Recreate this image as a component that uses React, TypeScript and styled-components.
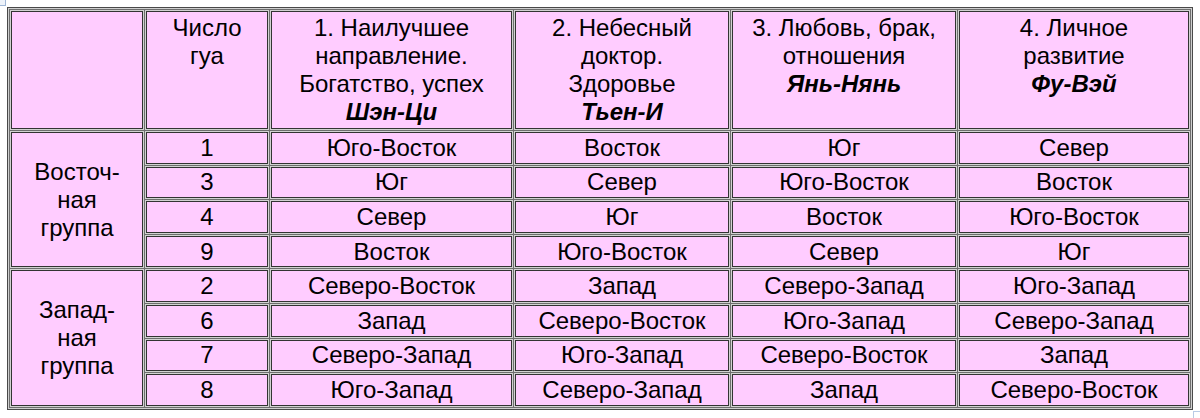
import React from "react";
import styled, { createGlobalStyle } from "styled-components";

const GlobalStyle = createGlobalStyle`
  html, body {
    margin: 0;
    padding: 0;
    background: #ffffff;
  }
  body {
    font-family: "Liberation Sans", Arial, Helvetica, sans-serif;
    color: #000;
  }
`;

const Page = styled.div`
  position: relative;
  width: 1200px;
  height: 418px;
  overflow: hidden;
  padding: 7px 0 0 7px;
  box-sizing: border-box;
`;

const Table = styled.table`
  table-layout: fixed;
  width: 1186px;
  border-collapse: separate;
  border-spacing: 3px;
  border: 1px solid #4a4a4a;
  box-shadow: inset 0 0 0 1px #cfcfcf;
  background: #6e6e6e;
  font-family: "Liberation Sans", Arial, Helvetica, sans-serif;
  font-size: 24px;
  line-height: 28px;
  color: #000;
`;

const Cell = styled.td<{ $w?: number; $head?: boolean }>`
  box-sizing: border-box;
  ${(p) => (p.$w ? `width: ${p.$w}px;` : "")}
  height: ${(p) => (p.$head ? "118px" : "31.6px")};
  padding: ${(p) => (p.$head ? "2px 1px 0" : "0 1px")};
  background: #ffccff;
  border: 1px solid #333333;
  box-shadow: 0 0 0 1px #d2d2d2;
  text-align: center;
  vertical-align: ${(p) => (p.$head ? "top" : "middle")};
  font-weight: normal;
  white-space: nowrap;
`;

const GroupCell = styled(Cell)`
  height: auto;
  white-space: normal;
`;

const Name = styled.b`
  font-style: italic;
  font-weight: bold;
`;

const CornerMark = styled.div`
  position: absolute;
  left: 0;
  top: 0;
  width: 5px;
  height: 5px;
  background: #eef3fa;
  border-right: 1px solid #9fb6d6;
  border-bottom: 1px solid #9fb6d6;
`;

const EndMark = styled.div`
  position: absolute;
  left: 1193px;
  top: 411px;
  width: 10px;
  height: 10px;
  border-left: 1px solid #b9cbe6;
  border-top: 1px solid #b9cbe6;
`;

type Row = [string, string, string, string, string];

const groups: { label: React.ReactNode; rows: Row[] }[] = [
  {
    label: (
      <>
        Восточ-
        <br />
        ная
        <br />
        группа
      </>
    ),
    rows: [
      ["1", "Юго-Восток", "Восток", "Юг", "Север"],
      ["3", "Юг", "Север", "Юго-Восток", "Восток"],
      ["4", "Север", "Юг", "Восток", "Юго-Восток"],
      ["9", "Восток", "Юго-Восток", "Север", "Юг"],
    ],
  },
  {
    label: (
      <>
        Запад-
        <br />
        ная
        <br />
        группа
      </>
    ),
    rows: [
      ["2", "Северо-Восток", "Запад", "Северо-Запад", "Юго-Запад"],
      ["6", "Запад", "Северо-Восток", "Юго-Запад", "Северо-Запад"],
      ["7", "Северо-Запад", "Юго-Запад", "Северо-Восток", "Запад"],
      ["8", "Юго-Запад", "Северо-Запад", "Запад", "Северо-Восток"],
    ],
  },
];

export default function App() {
  return (
    <>
      <GlobalStyle />
      <Page>
        <CornerMark />
        <Table>
          <tbody>
            <tr>
              <Cell as="th" $head $w={132}></Cell>
              <Cell as="th" $head $w={122}>
                Число
                <br />
                гуа
              </Cell>
              <Cell as="th" $head $w={241}>
                1. Наилучшее
                <br />
                направление.
                <br />
                Богатство, успех
                <br />
                <Name>Шэн-Ци</Name>
              </Cell>
              <Cell as="th" $head $w={214}>
                2. Небесный
                <br />
                доктор.
                <br />
                Здоровье
                <br />
                <Name>Тьен-И</Name>
              </Cell>
              <Cell as="th" $head $w={224}>
                3. Любовь, брак,
                <br />
                отношения
                <br />
                <Name>Янь-Нянь</Name>
              </Cell>
              <Cell as="th" $head $w={230}>
                4. Личное
                <br />
                развитие
                <br />
                <Name>Фу-Вэй</Name>
              </Cell>
            </tr>
            {groups.map((g, gi) =>
              g.rows.map((r, ri) => (
                <tr key={`${gi}-${ri}`}>
                  {ri === 0 && <GroupCell rowSpan={g.rows.length}>{g.label}</GroupCell>}
                  {r.map((v, ci) => (
                    <Cell key={ci}>{v}</Cell>
                  ))}
                </tr>
              ))
            )}
          </tbody>
        </Table>
        <EndMark />
      </Page>
    </>
  );
}
